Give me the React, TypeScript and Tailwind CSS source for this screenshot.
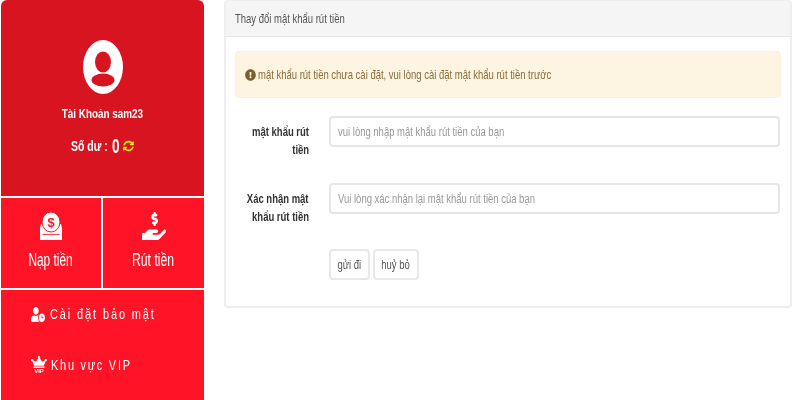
import { FaCrown, FaExclamationCircle, FaHandHoldingUsd, FaSyncAlt, FaUserClock } from "react-icons/fa";

const font = "font-['Liberation_Sans',sans-serif]";

const Sidebar = () => {
  return (
    <div className={`flex flex-col w-[203px] h-[404px] ml-px shrink-0 text-white ${font}`}>
      <div className="flex flex-col items-center h-[196px] pt-[40px] bg-[#d7141f] rounded-t-md">
        <svg width="40" height="54" viewBox="0 0 40 54">
          <ellipse cx="20" cy="27" rx="20" ry="27" fill="#fff" />
          <ellipse cx="20" cy="22" rx="8" ry="10.5" fill="#d7141f" />
          <ellipse cx="20" cy="40" rx="11.5" ry="6.5" fill="#d7141f" />
        </svg>
        <p className="mt-[12px] text-[13px] leading-[16px] font-bold whitespace-nowrap scale-x-[.76]">Tài Khoản sam23</p>
        <div className="flex items-center w-[64px] mt-[13px] h-[22px] font-bold whitespace-nowrap">
          <span className="text-[15px] scale-x-[.7] origin-left w-[41px] shrink-0">Số dư :</span>
          <span className="text-[20px] scale-x-[.68] origin-left w-[11px] shrink-0">0</span>
          <FaSyncAlt className="w-[11px] h-[12px] shrink-0 text-[#fbe80f]" />
        </div>
      </div>
      <div className="flex h-[90px] mt-[2px] gap-[2px]">
        <div className="flex flex-col items-center w-[100px] pt-[14px] bg-[#fe1426]">
          <svg width="22" height="28" viewBox="0 0 22 28" fill="#fff">
            <path d="M1 12h20l1 4v12H0V16z" />
            <ellipse cx="11" cy="10" rx="9" ry="10" stroke="#fe1426" strokeWidth="1" />
            <path d="M2.5 22.5h17" stroke="#fe1426" strokeWidth="0.8" />
            <text x="11" y="14.5" textAnchor="middle" fontSize="13" fontWeight="700" fill="#fe1426" fontFamily="Liberation Sans">$</text>
          </svg>
          <p className="mt-[10px] text-[18px] leading-[20px] whitespace-nowrap scale-x-[.66]">Nạp tiền</p>
        </div>
        <div className="flex flex-col items-center flex-1 pt-[14px] bg-[#fe1426]">
          <FaHandHoldingUsd className="w-[24px] h-[28px]" preserveAspectRatio="none" />
          <p className="mt-[10px] text-[18px] leading-[20px] whitespace-nowrap scale-x-[.68]">Rút tiền</p>
        </div>
      </div>
      <div className="flex-1 mt-[2px] pt-[14px] pl-[30px] bg-[#fe1426]">
        <div className="flex items-center h-[20px]">
          <FaUserClock className="w-[14px] h-[15px] shrink-0" preserveAspectRatio="none" />
          <span className="ml-[5px] text-[15px] tracking-[2.6px] whitespace-nowrap origin-left scale-x-[.73]">Cài đặt bảo mật</span>
        </div>
        <div className="flex items-center h-[20px] mt-[31px]">
          <div className="flex flex-col items-center w-[16px] shrink-0">
            <FaCrown className="w-[16px] h-[12px]" preserveAspectRatio="none" />
            <span className="text-[6px] leading-[6px] font-bold">VIP</span>
          </div>
          <span className="ml-[4px] text-[15px] tracking-[2.4px] whitespace-nowrap origin-left scale-x-[.73]">Khu vực VIP</span>
        </div>
      </div>
    </div>
  );
};

const Field = ({ label, placeholder, first }: { label: string[]; placeholder: string; first?: boolean }) => {
  return (
    <div className={`flex h-[31px] ${first ? "mt-[18px]" : "mt-[36px]"}`}>
      <div className="flex flex-col items-end w-[74px] pt-[7px] text-[13px] leading-[18px] font-bold text-[#333]">
        {label.map((l) => (
          <p key={l} className="whitespace-nowrap origin-right scale-x-[.73]">{l}</p>
        ))}
      </div>
      <div className="flex items-center w-[451px] h-[31px] ml-[20px] pl-[7px] bg-white border-2 border-[#e6e6e6] rounded text-[13px] text-[#999]">
        <span className="whitespace-nowrap origin-left scale-x-[.73]">{placeholder}</span>
      </div>
    </div>
  );
};

export default function App() {
  return (
    <div className="w-[800px] h-[400px] overflow-hidden bg-white">
      <div className="flex h-[404px] blur-[0.4px]">
        <Sidebar />
        <div className={`flex flex-col w-[568px] h-[308px] ml-[20px] bg-white border-x-2 border-b-2 border-t border-[#eeeeee] rounded ${font}`}>
          <div className="flex items-center h-[36px] shrink-0 pl-[9px] bg-[#f5f5f5] border-b border-[#e5e5e5] text-[13px] text-[#555]">
            <span className="whitespace-nowrap origin-left scale-x-[.73]">Thay đổi mật khẩu rút tiền</span>
          </div>
          <div className="px-[9px]">
            <div className="flex items-center w-[546px] h-[47px] mt-[14px] pl-[9px] bg-[#fdf5e1] border border-[#fbf0d8] rounded text-[13px] text-[#8a6d3b]">
              <FaExclamationCircle className="w-[11px] h-[12px] shrink-0 text-[#7a5f30]" preserveAspectRatio="none" />
              <span className="ml-[2px] whitespace-nowrap origin-left scale-x-[.73]">mật khẩu rút tiền chưa cài đặt, vui lòng cài đặt mật khẩu rút tiền trước</span>
            </div>
            <Field first label={["mật khẩu rút", "tiền"]} placeholder="vui lòng nhập mật khẩu rút tiền của bạn" />
            <Field label={["Xác nhận mật", "khẩu rút tiền"]} placeholder="Vui lòng xác nhận lại mật khẩu rút tiền của bạn" />
            <div className="flex mt-[35px] ml-[94px] gap-[3px] text-[13px] text-[#555]">
              <button className="flex items-center justify-center w-[41px] h-[31px] bg-white border-2 border-[#e8e8e8] rounded">
                <span className="whitespace-nowrap scale-x-[.73]">gửi đi</span>
              </button>
              <button className="flex items-center justify-center w-[46px] h-[31px] bg-white border-2 border-[#e8e8e8] rounded">
                <span className="whitespace-nowrap scale-x-[.73]">huỷ bỏ</span>
              </button>
            </div>
          </div>
        </div>
      </div>
    </div>
  );
}
